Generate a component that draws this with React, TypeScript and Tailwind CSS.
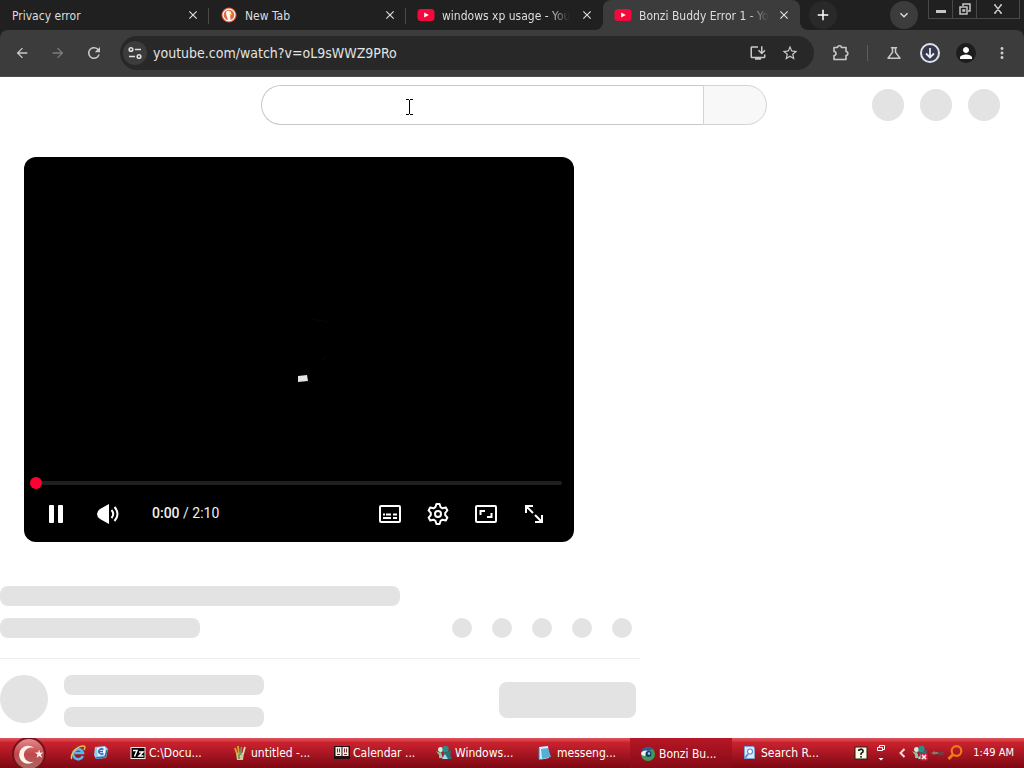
import type { ReactNode } from "react";
import {
  MdArrowBack,
  MdArrowForward,
  MdRefresh,
  MdStarOutline,
  MdOutlineScience,
  MdPerson,
  MdMoreVert,
  MdInstallDesktop,
  MdClose,
  MdAdd,
  MdExpandMore,
} from "react-icons/md";

interface ITab {
  title: string;
  width: string;
  icon?: ReactNode;
  active?: boolean;
  separator?: boolean;
  faded?: boolean;
}

interface ITask {
  title: string;
  icon: ReactNode;
  active?: boolean;
}

function YoutubeIcon() {
  return (
    <svg viewBox="0 0 18 14" className="-mx-px h-3.5 w-[18px] shrink-0">
      <rect x="0.5" y="1" width="17" height="12" rx="3.5" fill="#f5093c" />
      <path d="M7.2 4.4v5.2L11.8 7z" fill="#fff" />
    </svg>
  );
}

function DuckIcon() {
  return (
    <svg viewBox="0 0 16 16" className="h-4 w-4 shrink-0">
      <circle cx="8" cy="8" r="7.6" fill="#d9502f" />
      <circle cx="8" cy="8" r="5.9" fill="#e2683f" stroke="#fff" strokeWidth="1.2" />
      <path d="M5.2 4.6c1.6-1.4 4.4-.8 4.9 1.4l.3 1.6-1.3 1.2.6 4.2c-1 .5-1.9.5-2.7.2L5.1 7z" fill="#fff" />
      <path d="M8.6 7.2c1.3-.5 2.6-.4 2.9 0-.4.7-1.6 1-2.9.9z" fill="#fdb71a" />
    </svg>
  );
}

function CommandIcon() {
  return (
    <svg viewBox="0 0 16 16" className="h-4 w-4 shrink-0">
      <rect x="1" y="2.5" width="14" height="11" fill="#000" stroke="#f4efe6" />
      <path d="M3 5.5h4L4.5 11.5M9 7h4l-4 4h4.5" fill="none" stroke="#fff" strokeWidth="1.5" />
    </svg>
  );
}

function PaintIcon() {
  return (
    <svg viewBox="0 0 16 16" className="h-4 w-4 shrink-0">
      <path d="M4 8h8l-1 7H5z" fill="#d6c49a" />
      <path d="M5 9L3 3M7 10L6 1" stroke="#d9a53b" strokeWidth="1.8" />
      <path d="M8.5 10L9.5 2" stroke="#5fa060" strokeWidth="1.8" />
      <path d="M11 9l2-7" stroke="#ead9b2" strokeWidth="1.8" />
      <path d="M7 9v5" stroke="#5c8d4b" strokeWidth="1.5" />
    </svg>
  );
}

function CalendarIcon() {
  return (
    <svg viewBox="0 0 16 16" className="h-4 w-4 shrink-0">
      <rect x="0" y="1" width="16" height="13" fill="#1d1012" />
      <path d="M1.5 2h6v9h-6zM8.5 2h6v9h-6z" fill="#f6eee4" />
      <path d="M3.5 3.5v4M5.5 3.5v4M10.5 3.5v4M12.5 3.5v4M3 9.5h3M10 9.5h3" stroke="#7d2631" />
    </svg>
  );
}

function MessengerIcon({ error = false }: { error?: boolean }) {
  return (
    <svg viewBox="0 0 16 16" className="h-4 w-4 shrink-0">
      <circle cx="4.5" cy="4.5" r="2.5" fill="#d3ecdc" />
      <path d="M0 6c2 1 3 2 5 1l2 6H3c1-3-1-4-3-7z" fill="#8ccaa6" />
      <circle cx="9.5" cy="4" r="3.2" fill="#2b8c88" />
      <path d="M7 7c3 1 5 0 8-2-1 4-1 6 1 9H6c1-2 2-4 1-7z" fill="#23757c" />
      <path d="M9 9l3 5H6z" fill="#a8dcec" />
      {error && (
        <>
          <rect x="8.5" y="8.5" width="7" height="7" fill="#d9213a" />
          <path d="M10 10l4 4M14 10l-4 4" stroke="#fff" strokeWidth="1.5" />
        </>
      )}
    </svg>
  );
}

function NotepadIcon() {
  return (
    <svg viewBox="0 0 16 16" className="h-4 w-4 shrink-0">
      <path d="M1 2l9-1 1 12-10 2z" fill="#d8f0f9" />
      <path d="M3 4l7-1 3 9-9 2z" fill="#55b0d9" />
      <path d="M1 3v11l3 1" fill="none" stroke="#3e7fae" />
    </svg>
  );
}

function BrowserIcon() {
  return (
    <svg viewBox="0 0 16 16" className="h-4 w-4 shrink-0">
      <circle cx="8" cy="8" r="7" fill="#3f9b57" />
      <path d="M1 7a7 7 0 0 1 12-4L8 5z" fill="#2b5d97" />
      <path d="M1 7c2-3 5-3 7-2l-3 5C3 10 1 9 1 7z" fill="#edf3ef" />
      <circle cx="8.5" cy="8" r="3" fill="#143d73" />
      <circle cx="9" cy="7.5" r="1.2" fill="#9fd2ef" />
    </svg>
  );
}

function SearchPageIcon() {
  return (
    <svg viewBox="0 0 16 16" className="h-4 w-4 shrink-0">
      <path d="M2.5 1.5h9l1 2v10h-10z" fill="#dfe9fb" stroke="#7f9fd6" />
      <circle cx="8" cy="6.5" r="2.5" fill="#fff" stroke="#6089cc" strokeWidth="1.2" />
      <path d="M6 9l-3 4" stroke="#6b8cc6" strokeWidth="2" />
    </svg>
  );
}

const tabs: ITab[] = [
  { title: "Privacy error", width: "max-w-[209px]", separator: true },
  { title: "New Tab", width: "max-w-[197px]", icon: <DuckIcon />, separator: true },
  { title: "windows xp usage - You", width: "max-w-[197px]", icon: <YoutubeIcon />, faded: true },
  { title: "Bonzi Buddy Error 1 - Yo", width: "max-w-[197px]", icon: <YoutubeIcon />, faded: true, active: true },
];

const tasks: ITask[] = [
  { title: "C:\\Docu...", icon: <CommandIcon /> },
  { title: "untitled -...", icon: <PaintIcon /> },
  { title: "Calendar ...", icon: <CalendarIcon /> },
  { title: "Windows...", icon: <MessengerIcon /> },
  { title: "messeng...", icon: <NotepadIcon /> },
  { title: "Bonzi Bu...", icon: <BrowserIcon />, active: true },
  { title: "Search R...", icon: <SearchPageIcon /> },
];

function Tab({ tab }: { tab: ITab }) {
  return (
    <div
      className={`relative flex h-full min-w-0 flex-1 items-center pr-2 pl-3 ${tab.width} ${
        tab.active ? "rounded-t-lg bg-[#3c3c3c]" : ""
      }`}
    >
      {tab.active && (
        <>
          <svg viewBox="0 0 8 8" className="absolute bottom-0 -left-2 h-2 w-2">
            <path d="M8 0v8H0a8 8 0 0 0 8-8z" fill="#3c3c3c" />
          </svg>
          <svg viewBox="0 0 8 8" className="absolute -right-2 bottom-0 h-2 w-2">
            <path d="M0 0v8h8a8 8 0 0 1-8-8z" fill="#3c3c3c" />
          </svg>
        </>
      )}
      <button className="flex min-w-0 flex-1 items-center gap-2 text-left">
        {tab.icon}
        <span
          className={`pt-0.5 text-xs whitespace-nowrap text-[#dedede] ${
            tab.faded ? "[mask-image:linear-gradient(to_right,#000_84%,transparent)]" : ""
          }`}
        >
          {tab.title}
        </span>
      </button>
      <button aria-label={`Close ${tab.title}`} className="flex h-4 w-4 shrink-0 items-center justify-center text-[#dedede]">
        <MdClose className="h-3.5 w-3.5" />
      </button>
      {tab.separator && <span className="absolute top-2 right-0 h-4 w-px bg-[#4a4a4a]" />}
    </div>
  );
}

function TabStrip() {
  return (
    <div className="flex h-[30px] items-start bg-[#202020]">
      <div className="flex h-full flex-1">
        {tabs.map((tab) => (
          <Tab key={tab.title} tab={tab} />
        ))}
        <button aria-label="New tab" className="mt-px ml-[9px] flex h-7 w-7 items-center justify-center rounded-full bg-[#292929] text-white">
          <MdAdd className="h-[18px] w-[18px]" />
        </button>
      </div>
      <button aria-label="Search tabs" className="mt-px mr-2.5 flex h-7 w-7 items-center justify-center rounded-full bg-[#3c3c3c] text-[#dedede]">
        <MdExpandMore className="h-4 w-4" />
      </button>
      <div className="mr-1 flex h-[19px] divide-x divide-[#484848] border border-t-0 border-[#484848] text-[#c5c5c5]">
        <button aria-label="Minimize" className="flex w-6 items-center justify-center">
          <svg viewBox="0 0 12 12" className="h-3 w-3">
            <path d="M1 7h10v3H1z" fill="currentColor" />
          </svg>
        </button>
        <button aria-label="Restore" className="flex w-6 items-center justify-center">
          <svg viewBox="0 0 12 12" className="h-3 w-3" fill="none" stroke="currentColor" strokeWidth="1.5">
            <path d="M4 3V1h7v7H9M1 4h7v7H1zM4 7h1.5v1H4z" />
          </svg>
        </button>
        <button aria-label="Close window" className="flex w-[42px] items-center justify-center">
          <svg viewBox="0 0 12 12" className="h-3 w-3" fill="none" stroke="currentColor" strokeWidth="1.5">
            <path d="M3 2l6 8M9 2l-6 8M2 2h2M8 2h2M2 10h2M8 10h2" />
          </svg>
        </button>
      </div>
    </div>
  );
}

function Toolbar() {
  return (
    <div className="flex h-[47px] items-center rounded-t-lg border-b border-[#4a4a4a] bg-[#3c3c3c] pr-[13px] pl-3.5 text-[#c9c9c9]">
      <button aria-label="Back" className="mr-5">
        <MdArrowBack className="h-4 w-4" />
      </button>
      <button aria-label="Forward" className="mr-[19px] text-[#7c7c7c]">
        <MdArrowForward className="h-4 w-4" />
      </button>
      <button aria-label="Reload" className="mr-[17px]">
        <MdRefresh className="h-[18px] w-[18px]" />
      </button>
      <div className="flex h-[34px] flex-1 items-center rounded-full bg-[#282828] pr-[15px] pl-[3px]">
        <button aria-label="Site information" className="flex h-6 w-6 shrink-0 items-center justify-center rounded-full bg-[#3c3c3c]">
          <svg viewBox="0 0 16 16" className="h-4 w-4" fill="none" stroke="#dedede" strokeWidth="1.6">
            <circle cx="4" cy="4.5" r="1.8" />
            <path d="M8 4.5h6M2 11.5h6" />
            <circle cx="12" cy="11.5" r="1.8" />
          </svg>
        </button>
        <input
          aria-label="Address"
          defaultValue="youtube.com/watch?v=oL9sWWZ9PRo"
          className="ml-1.5 min-w-0 flex-1 bg-transparent text-sm text-[#e3e3e3] outline-none"
        />
        <button aria-label="Install app" className="mr-3.5">
          <MdInstallDesktop className="h-[18px] w-[18px]" />
        </button>
        <button aria-label="Bookmark">
          <MdStarOutline className="h-[18px] w-[18px]" />
        </button>
      </div>
      <button aria-label="Extensions" className="ml-[18px]">
        <svg viewBox="0 0 18 18" className="h-[18px] w-[18px]" fill="none" stroke="currentColor" strokeWidth="1.6" strokeLinejoin="round">
          <path d="M2 3.5h3.5a2 1.8 0 0 1 4 0H14v4a1.8 2 0 0 1 0 4v4H2v-4a2 2 0 0 0 0-4z" />
        </svg>
      </button>
      <span className="ml-[17px] h-4 w-px bg-[#5f5f5f]" />
      <button aria-label="Experiments" className="ml-[17px]">
        <MdOutlineScience className="h-[18px] w-[18px]" />
      </button>
      <button aria-label="Downloads" className="ml-4">
        <svg viewBox="0 0 22 22" className="h-[22px] w-[22px]">
          <circle cx="11" cy="11" r="9" fill="#363b4b" stroke="#dfe3ee" strokeWidth="2" />
          <path d="M11 6v9M7 11.5l4 4 4-4" fill="none" stroke="#e6e9f2" strokeWidth="1.8" />
        </svg>
      </button>
      <button aria-label="Profile" className="ml-[15px] flex h-5 w-5 items-center justify-center rounded-full bg-[#1d1d1d] text-white">
        <MdPerson className="h-[18px] w-[18px]" />
      </button>
      <button aria-label="Menu" className="ml-[17px]">
        <MdMoreVert className="h-[18px] w-[18px]" />
      </button>
    </div>
  );
}

function Masthead() {
  return (
    <header className="flex h-14 items-center justify-between px-6">
      <div className="w-[132px]" />
      <form className="flex h-10 w-[506px]">
        <div className="relative flex-1">
          <input
            aria-label="Search"
            className="h-full w-full rounded-l-full border border-r-0 border-[#c8c8c8] bg-white px-4 outline-none"
          />
          <svg viewBox="0 0 9 16" className="absolute top-3.5 left-36 h-4 w-[9px]" fill="none" stroke="#000">
            <path d="M1 .5h3M5 .5h3M4.5 1v14M1 15.5h3M5 15.5h3" />
          </svg>
        </div>
        <button type="button" aria-label="Submit search" className="w-16 rounded-r-full border border-[#d3d3d3] bg-[#f8f8f8]" />
      </form>
      <div className="flex gap-4">
        <div className="h-8 w-8 rounded-full bg-[#e3e3e3]" />
        <div className="h-8 w-8 rounded-full bg-[#e3e3e3]" />
        <div className="h-8 w-8 rounded-full bg-[#e3e3e3]" />
      </div>
    </header>
  );
}

function Player() {
  return (
    <section className="mt-6 ml-6 flex h-[385px] w-[550px] flex-col rounded-xl bg-black px-3 text-white">
      <div className="relative flex-1">
        <svg viewBox="0 0 60 80" className="absolute top-[150px] left-[242px] h-20 w-[60px]" fill="none">
          <path d="M34 12l16 3M49 48l-6 6" stroke="#080808" />
          <path d="M20 69l9-1 1 6-10 1z" fill="#e4e4e4" />
        </svg>
      </div>
      <input
        type="range"
        aria-label="Seek"
        defaultValue={0}
        className="h-3 w-full appearance-none bg-transparent [&::-webkit-slider-runnable-track]:h-1 [&::-webkit-slider-runnable-track]:rounded-full [&::-webkit-slider-runnable-track]:bg-[#202020] [&::-webkit-slider-thumb]:-mt-1 [&::-webkit-slider-thumb]:h-3 [&::-webkit-slider-thumb]:w-3 [&::-webkit-slider-thumb]:-translate-x-1.5 [&::-webkit-slider-thumb]:appearance-none [&::-webkit-slider-thumb]:rounded-full [&::-webkit-slider-thumb]:bg-[#ff0033]"
      />
      <div className="flex h-[53px] items-center pr-4 pb-1 pl-2">
        <button aria-label="Pause">
          <svg viewBox="0 0 24 24" className="h-6 w-6" fill="#fff">
            <rect x="5" y="3" width="5" height="18" rx="1" />
            <rect x="14" y="3" width="5" height="18" rx="1" />
          </svg>
        </button>
        <button aria-label="Mute" className="ml-7">
          <svg viewBox="0 0 24 24" className="h-6 w-6" fill="none" stroke="#fff" strokeWidth="2">
            <path d="M13 2v20L4 17Q1 15 1 12t3-5z" fill="#fff" stroke="none" />
            <path d="M15.5 8q3.5 4 0 8M18.5 5q6 7 0 14" />
          </svg>
        </button>
        <span className="ml-8 pb-0.5 font-[Roboto,sans-serif] text-sm text-[#f1f1f1]">
          <b className="font-medium">0:00</b> / 2:10
        </span>
        <div className="ml-auto flex gap-6">
          <button aria-label="Subtitles">
            <svg viewBox="0 0 24 24" className="h-6 w-6" fill="none" stroke="#fff" strokeWidth="2">
              <rect x="2" y="4" width="20" height="16" rx="1" />
              <path d="M5 12.5h2M8 12.5h5M15 12.5h4M5 16h8M15 16h4" strokeWidth="1.8" />
            </svg>
          </button>
          <button aria-label="Settings">
            <svg viewBox="0 0 24 24" className="h-6 w-6" fill="none" stroke="#fff" strokeWidth="2" strokeLinejoin="round">
              <path d="M10.4 2h3.2l1 3.2 1.9 1.1 3.3-.7 1.6 2.8-2.2 2.5v2.2l2.2 2.5-1.6 2.8-3.3-.7-1.900 1.100-1 3.200h-3.200l-1-3.200-1.900-1.100-3.300.7-1.600-2.800 2.200-2.500v-2.200L2.600 8.400l1.600-2.800 3.300.7 1.900-1.100z" />
              <circle cx="12" cy="12" r="3" />
            </svg>
          </button>
          <button aria-label="Theater mode">
            <svg viewBox="0 0 24 24" className="h-6 w-6" fill="none" stroke="#fff" strokeWidth="2">
              <rect x="2" y="4" width="20" height="16" rx="1" />
              <path d="M6.5 13V9H11M17.500 11v4H13" />
            </svg>
          </button>
          <button aria-label="Full screen">
            <svg viewBox="0 0 24 24" className="h-6 w-6" fill="none" stroke="#fff" strokeWidth="2">
              <path d="M4 11V4h7M4 4l7 7M20 13v7h-7M20 20l-7-7" />
            </svg>
          </button>
        </div>
      </div>
    </section>
  );
}

function WatchSkeleton() {
  return (
    <section className="mt-11 max-w-[640px]">
      <div className="h-5 w-[400px] rounded-lg bg-[#e3e3e3]" />
      <div className="mt-3 flex items-center justify-between border-b border-[#ececec] pr-2 pb-5">
        <div className="h-5 w-[200px] rounded-lg bg-[#e3e3e3]" />
        <div className="flex gap-5">
          {[0, 1, 2, 3, 4].map((i) => (
            <div key={i} className="h-5 w-5 rounded-full bg-[#e3e3e3]" />
          ))}
        </div>
      </div>
      <div className="mt-4 flex items-start gap-4 pr-1">
        <div className="h-12 w-12 rounded-full bg-[#e3e3e3]" />
        <div className="space-y-3">
          <div className="h-5 w-[200px] rounded-lg bg-[#e3e3e3]" />
          <div className="h-5 w-[200px] rounded-lg bg-[#e3e3e3]" />
        </div>
        <div className="mt-[7px] ml-auto h-9 w-[137px] rounded-lg bg-[#e3e3e3]" />
      </div>
    </section>
  );
}

function Taskbar() {
  return (
    <footer className="flex h-[30px] shrink-0 items-center bg-linear-to-b from-[#e0555c] via-[#cb222f] via-15% to-[#7c0812] text-white">
      <button aria-label="Start" className="ml-3">
        <svg viewBox="0 0 34 30" className="h-[30px] w-[34px]">
          <defs>
            <linearGradient id="orb" x1="0" y1="0" x2="0" y2="1">
              <stop offset="0" stopColor="#e58b8c" />
              <stop offset="0.5" stopColor="#c2474c" />
              <stop offset="1" stopColor="#a96c65" />
            </linearGradient>
          </defs>
          <circle cx="17" cy="16" r="17" fill="#741019" />
          <circle cx="17" cy="16" r="15" fill="url(#orb)" />
          <path d="M22 10a9 9 0 1 0 0 13.500 7.300 7.300 0 1 1 0-13.500z" fill="#fff2ea" />
          <path d="M27 11.5l1.200 3.200 3.300-.1-2.600 2 1.200 3.200-2.900-1.900-2.700 2 1-3.300-2.700-2 3.400-.1z" fill="#fff2ea" />
        </svg>
      </button>
      <button aria-label="Internet Explorer" className="ml-6">
        <svg viewBox="0 0 16 16" className="h-4 w-4" fill="none">
          <path d="M12.8 11A5 5 0 1 1 13 8H5" stroke="#55b8f2" strokeWidth="2.6" />
          <path d="M2 14C-1 12 6 1 13 1c3 0 2 2 1 4" stroke="#e8c34d" strokeWidth="1.4" />
        </svg>
      </button>
      <button aria-label="Outlook Express" className="ml-[7px]">
        <svg viewBox="0 0 16 16" className="h-4 w-4">
          <path d="M2 2l10-1 3 3-2 9-10 1-2-4z" fill="#9cc8ec" />
          <path d="M4 3l8-1 1 8-8 1z" fill="#eef7ff" />
          <path d="M10.500 4.500a3 2.500 0 1 0 0 4M6 6.500h4M3 13l9-1 2-7" fill="none" stroke="#2971b8" strokeWidth="1.5" />
        </svg>
      </button>
      <nav className="ml-[11px] flex h-full flex-1">
        {tasks.map((task) => (
          <button
            key={task.title}
            className={`flex h-full min-w-0 max-w-[102px] flex-1 items-center gap-[3px] pl-2.5 text-left text-xs whitespace-nowrap ${
              task.active ? "bg-linear-to-b from-[#b71726] to-[#850b16] pt-0.5" : ""
            }`}
          >
            {task.icon}
            <span>{task.title}</span>
          </button>
        ))}
      </nav>
      <div className="flex items-center pr-2.5">
        <button aria-label="Help">
          <svg viewBox="0 0 14 14" className="h-3.5 w-3.5">
            <rect x="1" y="1" width="12" height="12" fill="#fffbe6" stroke="#252012" />
            <path d="M4.8 5V4h1l.5-.7h1.5l1.2 1v1.5L7 7.5V9M7 10v1.7" fill="none" stroke="#111" strokeWidth="1.5" />
          </svg>
        </button>
        <button aria-label="Language bar options" className="mr-0.5 ml-2">
          <svg viewBox="0 0 10 18" className="h-[18px] w-2.5" fill="none" stroke="#fff">
            <path d="M3.5 3V1.5h5v4H7M1.5 3.5h5v3h-5z" />
            <path d="M2.5 14h5L5 16.5z" fill="#fff" stroke="none" />
          </svg>
        </button>
        <button aria-label="Show hidden icons" className="ml-2.5">
          <svg viewBox="0 0 8 10" className="h-2.5 w-2" fill="none" stroke="#ffd9dc" strokeWidth="2">
            <path d="M6.5 1l-4 4 4 4" />
          </svg>
        </button>
        <button aria-label="Messenger status" className="ml-1.5">
          <MessengerIcon error />
        </button>
        <button aria-label="Device" className="ml-0.5">
          <svg viewBox="0 0 16 16" className="h-4 w-4">
            <path d="M1 8l4-2v1h3v2H5v1z" fill="#8c7773" />
            <path d="M8 7h5l2 1-2 2H8z" fill="#72403f" />
          </svg>
        </button>
        <button aria-label="Find" className="ml-px">
          <svg viewBox="0 0 16 16" className="h-4 w-4" fill="none" stroke="#ef7a18">
            <circle cx="9.5" cy="6" r="4.8" strokeWidth="2.2" />
            <path d="M6 9.5L1.5 14" strokeWidth="3" />
          </svg>
        </button>
        <span className="ml-2.5 text-[11px] whitespace-nowrap">1:49 AM</span>
      </div>
    </footer>
  );
}

export default function App() {
  return (
    <div className="flex h-screen flex-col overflow-hidden bg-white font-['DejaVu_Sans_Condensed','Noto_Sans',sans-serif]">
      <div className="shrink-0 bg-[#202020]">
        <TabStrip />
        <Toolbar />
      </div>
      <main className="min-h-0 flex-1 overflow-hidden">
        <Masthead />
        <Player />
        <WatchSkeleton />
      </main>
      <Taskbar />
    </div>
  );
}
